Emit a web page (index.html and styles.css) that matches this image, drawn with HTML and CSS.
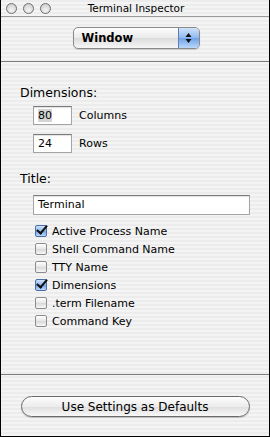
FILE: index.html
```html
<!DOCTYPE html>
<html lang="en">
<head>
    <meta charset="UTF-8">
    <title>Terminal Inspector</title>
    <link rel="stylesheet" href="styles.css">
</head>
<body>
    <div class="window">
        <div class="titlebar">
            <div class="lights">
                <span class="light"></span>
                <span class="light"></span>
                <span class="light"></span>
            </div>
            <div class="title">Terminal Inspector</div>
        </div>

        <div class="top-section">
            <div class="popup">
                <span class="popup-label">Window</span>
                <span class="popup-arrows">
                    <svg width="7" height="12" viewBox="0 0 7 12">
                        <path d="M3.5 1 L6.5 5 L0.5 5 Z" fill="#111"/>
                        <path d="M3.5 11 L6.5 7 L0.5 7 Z" fill="#111"/>
                    </svg>
                </span>
            </div>
        </div>

        <div class="main-section">
            <div class="heading">Dimensions:</div>
            <div class="dims">
                <div class="dim-row">
                    <div class="field small"><span class="sel">80</span></div>
                    <span class="label">Columns</span>
                </div>
                <div class="dim-row">
                    <div class="field small">24</div>
                    <span class="label">Rows</span>
                </div>
            </div>

            <div class="heading title-heading">Title:</div>
            <div class="field wide">Terminal</div>

            <!-- Title options -->
            <ul class="checks">
                <li><span class="box checked"></span>Active Process Name</li>
                <li><span class="box"></span>Shell Command Name</li>
                <li><span class="box"></span>TTY Name</li>
                <li><span class="box checked"></span>Dimensions</li>
                <li><span class="box"></span>.term Filename</li>
                <li><span class="box"></span>Command Key</li>
            </ul>
        </div>

        <div class="bottom-section">
            <button class="pill">Use Settings as Defaults</button>
        </div>
    </div>
</body>
</html>
```

FILE: styles.css
```css
body {
    margin: 0;
    padding: 0;
    font-family: 'DejaVu Sans', Verdana, sans-serif;
    color: #000;
}

.window {
    width: 270px;
    height: 437px;
    box-sizing: border-box;
    border: 1px solid #000;
    border-top: none;
    display: flex;
    flex-direction: column;
    background: repeating-linear-gradient(#ececec 0 2px, #f4f4f4 2px 4px);
}

.titlebar {
    height: 16px;
    border-bottom: 1px solid #9a9a9a;
    position: relative;
    display: flex;
    align-items: center;
    justify-content: center;
}

.lights {
    position: absolute;
    left: 5px;
    top: 3px;
    display: flex;
    gap: 6px;
}

.light {
    width: 9px;
    height: 9px;
    border-radius: 50%;
    border: 1px solid #6e6e6e;
    background: radial-gradient(circle at 50% 70%, #f4f4f4, #c8c8c8);
}

.title {
    font-size: 10.5px;
    line-height: 16px;
    margin-left: 2px;
}

.top-section {
    height: 45px;
    border-bottom: 1px solid #7c7c7c;
    display: flex;
    justify-content: center;
    padding-top: 10px;
    box-sizing: border-box;
}

.popup {
    width: 127px;
    height: 22px;
    box-sizing: border-box;
    border: 1px solid #8a8a8a;
    border-radius: 5px;
    display: flex;
    overflow: hidden;
    background: linear-gradient(#fdfdfd, #eaeaea 50%, #dcdcdc 51%, #f6f6f6);
    box-shadow: 0 1px 1px rgba(0, 0, 0, 0.15);
    margin-left: 2px;
}

.popup-label {
    flex: 1;
    font-size: 11.5px;
    font-weight: bold;
    line-height: 20px;
    padding-left: 8px;
}

.popup-arrows {
    width: 20px;
    display: flex;
    align-items: center;
    justify-content: center;
    border-left: 1px solid #5a7fb8;
    background: linear-gradient(#cfe2fa, #8fb8ee 50%, #6fa0e6 51%, #bcd8fb);
}

.main-section {
    flex: 1;
    border-bottom: 1px solid #7c7c7c;
    padding: 23px 19px 0;
    display: flex;
    flex-direction: column;
}

.heading {
    font-size: 12.5px;
    line-height: 15px;
}

.dims {
    display: flex;
    flex-direction: column;
    gap: 9px;
    margin-top: 6px;
    padding-left: 13px;
}

.dim-row {
    display: flex;
    align-items: center;
    gap: 7px;
}

.field {
    box-sizing: border-box;
    background: #fff;
    border: 1px solid #a4a4a4;
    border-top-color: #7a7a7a;
    box-shadow: inset 0 1px 1px rgba(0, 0, 0, 0.12);
    font-size: 11px;
    line-height: 17px;
    padding-left: 4px;
}

.field.small {
    width: 39px;
    height: 19px;
}

.sel {
    background: #d4d4d4;
}

.label {
    font-size: 11px;
}

.title-heading {
    margin-top: 18px;
}

.field.wide {
    margin: 9px 0 0 13px;
    width: 217px;
    height: 20px;
    line-height: 18px;
}

.checks {
    list-style: none;
    margin: 7px 0 0 15px;
    padding: 0;
}

.checks li {
    height: 18px;
    display: flex;
    align-items: center;
    font-size: 11px;
}

.box {
    width: 12px;
    height: 12px;
    box-sizing: border-box;
    border: 1px solid #8c8c8c;
    border-radius: 2px;
    background: linear-gradient(#ffffff, #e6e6e6 50%, #d8d8d8 51%, #f7f7f7);
    margin-right: 5px;
    position: relative;
}

.box.checked {
    border-color: #4a6ea8;
    background: linear-gradient(#cfe2fa, #8fb8ee 50%, #6fa0e6 51%, #bcd8fb);
}

.box.checked::after {
    content: "";
    position: absolute;
    left: 3px;
    top: -3px;
    width: 4px;
    height: 9px;
    border: solid #111;
    border-width: 0 2.5px 2.5px 0;
    transform: rotate(40deg);
}

.bottom-section {
    height: 61px;
    display: flex;
    justify-content: center;
    padding-top: 21px;
    box-sizing: border-box;
}

.pill {
    width: 229px;
    height: 21px;
    border: 1px solid #6a6a6a;
    border-radius: 11px;
    background: linear-gradient(#fdfdfd, #ececec 50%, #dedede 51%, #f8f8f8);
    box-shadow: 0 1px 1px rgba(0, 0, 0, 0.2);
    font-family: 'DejaVu Sans', Verdana, sans-serif;
    font-size: 12px;
    color: #000;
    padding: 0;
}
```
